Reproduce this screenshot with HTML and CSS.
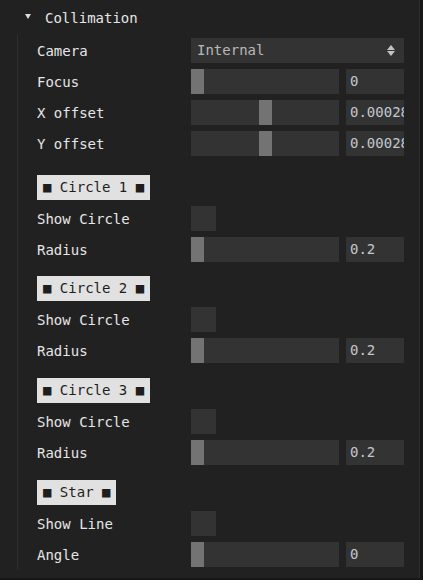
FILE: index.html
```html
<!DOCTYPE html>
<html>
<head>
<meta charset="utf-8">
<link rel="stylesheet" href="styles.css">
</head>
<body>
<div class="panel">
  <div class="title"><span class="caret"></span><span class="title-text">Collimation</span></div>
  <div class="folder">
    <div class="row">
      <span class="label">Camera</span>
      <div class="select"><span>Internal</span><span class="arrows"><span class="up"></span><span class="down"></span></span></div>
    </div>
    <div class="row">
      <span class="label">Focus</span>
      <div class="slider"><div class="handle" style="margin-left:0px"></div></div>
      <div class="number">0</div>
    </div>
    <div class="row">
      <span class="label">X offset</span>
      <div class="slider"><div class="handle" style="margin-left:68px"></div></div>
      <div class="number">0.00028</div>
    </div>
    <div class="row">
      <span class="label">Y offset</span>
      <div class="slider"><div class="handle" style="margin-left:68px"></div></div>
      <div class="number">0.00028</div>
    </div>

    <div class="row head first"><span class="tag">■ Circle 1 ■</span></div>
    <div class="row"><span class="label">Show Circle</span><div class="check"></div></div>
    <div class="row">
      <span class="label">Radius</span>
      <div class="slider"><div class="handle" style="margin-left:0px"></div></div>
      <div class="number">0.2</div>
    </div>

    <div class="row head second"><span class="tag">■ Circle 2 ■</span></div>
    <div class="row"><span class="label">Show Circle</span><div class="check"></div></div>
    <div class="row">
      <span class="label">Radius</span>
      <div class="slider"><div class="handle" style="margin-left:0px"></div></div>
      <div class="number">0.2</div>
    </div>

    <div class="row head"><span class="tag">■ Circle 3 ■</span></div>
    <div class="row"><span class="label">Show Circle</span><div class="check"></div></div>
    <div class="row">
      <span class="label">Radius</span>
      <div class="slider"><div class="handle" style="margin-left:0px"></div></div>
      <div class="number">0.2</div>
    </div>

    <div class="row head"><span class="tag">■ Star ■</span></div>
    <div class="row"><span class="label">Show Line</span><div class="check"></div></div>
    <div class="row">
      <span class="label">Angle</span>
      <div class="slider"><div class="handle" style="margin-left:0px"></div></div>
      <div class="number">0</div>
    </div>
  </div>
</div>
</body>
</html>
```
FILE: styles.css
```css
html, body {
  margin: 0;
  padding: 0;
  background: #171717;
}
body {
  width: 423px;
  height: 580px;
  overflow: hidden;
  font-family: "DejaVu Sans Mono", "Liberation Mono", monospace;
  font-size: 14px;
  color: #e6e6e6;
}
.panel {
  width: 420px;
  height: 578px;
  background: #212121;
  border-right: 1px solid #2e2e2e;
  box-sizing: border-box;
}
.title {
  height: 35px;
  display: flex;
  align-items: center;
  padding-left: 25px;
  box-sizing: border-box;
}
.caret {
  width: 0;
  height: 0;
  border-left: 3px solid transparent;
  border-right: 3px solid transparent;
  border-top: 5px solid #dcdcdc;
  margin-top: -2px;
}
.title-text {
  margin-left: 14px;
  color: #e6e6e6;
}
.folder {
  margin-left: 17px;
  border-left: 1px solid #2f2f2f;
  padding-left: 19px;
  display: flex;
  flex-direction: column;
  width: 367px;
}
.row {
  height: 31px;
  display: flex;
  align-items: center;
}
.row.head {
  height: 31px;
  margin-top: 9px;
  align-items: flex-start;
  padding-top: 3px;
  box-sizing: border-box;
}
.row.head.first {
  margin-top: 13px;
}
.row.head.second {
  margin-top: 8px;
}
.label {
  width: 154px;
  flex: none;
  color: #e6e6e6;
}
.select {
  width: 213px;
  height: 25px;
  background: #333333;
  display: flex;
  align-items: center;
  justify-content: space-between;
  padding: 0 9px 0 6px;
  box-sizing: border-box;
  color: #b8b8b8;
  margin-top: -1px;
}
.arrows {
  display: flex;
  flex-direction: column;
  gap: 1px;
}
.up, .down {
  width: 0;
  height: 0;
  border-left: 4px solid transparent;
  border-right: 4px solid transparent;
}
.up { border-bottom: 5px solid #c4c4c4; }
.down { border-top: 5px solid #c4c4c4; }
.slider {
  width: 148px;
  height: 25px;
  background: #333333;
  display: flex;
  flex: none;
}
.handle {
  width: 13px;
  height: 25px;
  background: #737373;
}
.number {
  width: 59px;
  height: 25px;
  margin-left: 7px;
  background: #333333;
  color: #c2c8d0;
  padding-left: 4px;
  box-sizing: border-box;
  line-height: 25px;
  overflow: hidden;
  white-space: nowrap;
}
.check {
  width: 25px;
  height: 25px;
  background: #333333;
}
.tag {
  display: inline-block;
  height: 25px;
  line-height: 25px;
  padding: 0 6px;
  background: #e1e1e1;
  color: #1e1e1e;
  white-space: nowrap;
}
```
